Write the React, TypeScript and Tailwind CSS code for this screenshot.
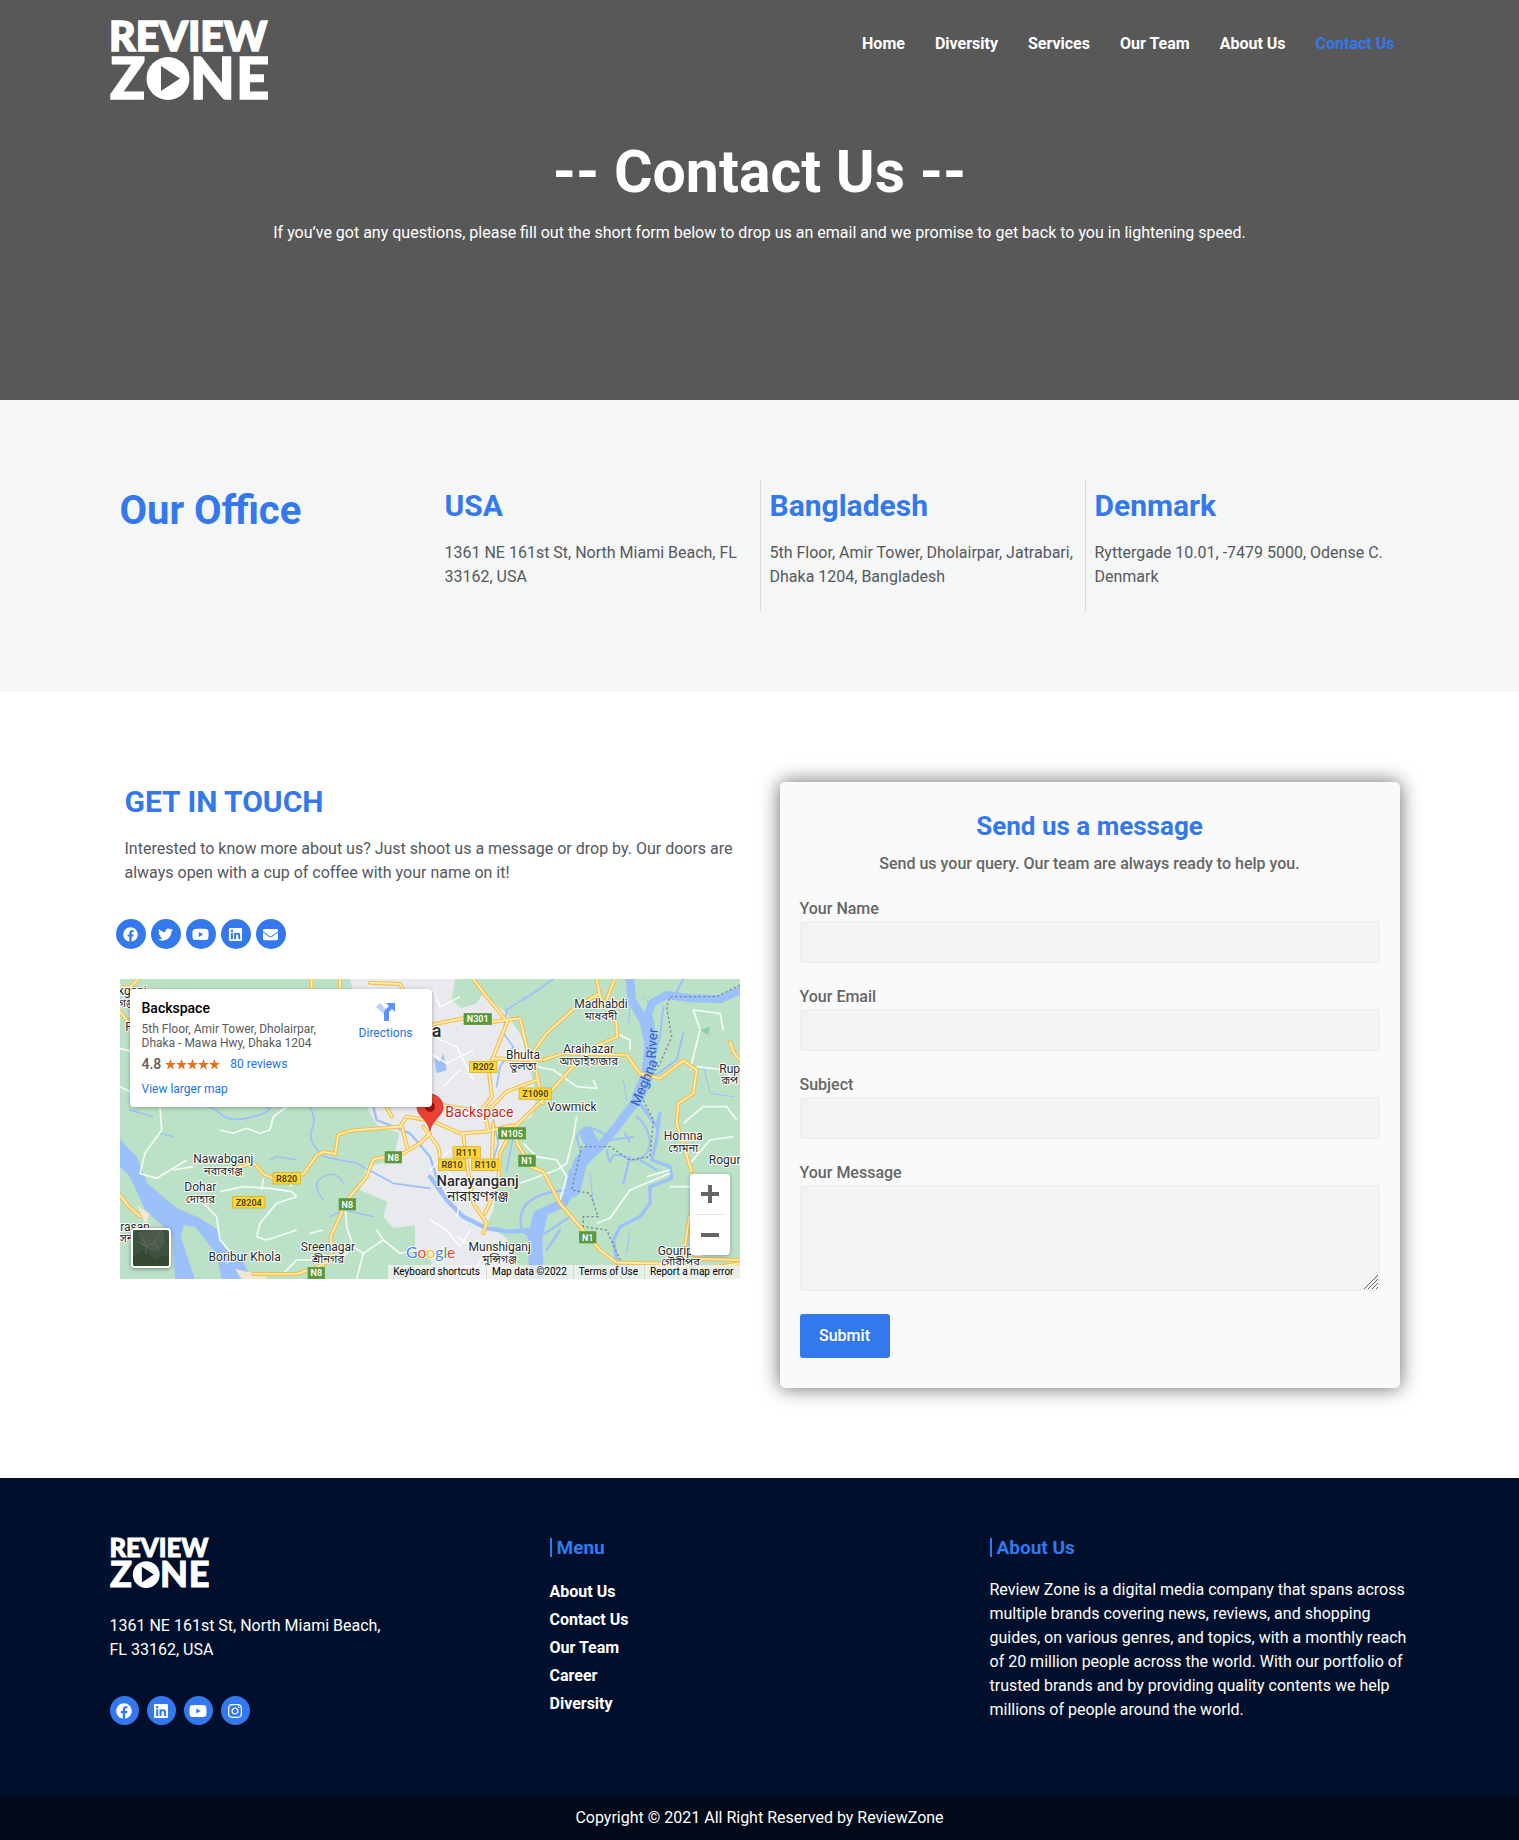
import React from "react";
import {
  FaEnvelope,
  FaFacebook,
  FaInstagram,
  FaLinkedin,
  FaTwitter,
  FaYoutube,
} from "react-icons/fa";

const NAV = ["Home", "Diversity", "Services", "Our Team", "About Us", "Contact Us"];

const OFFICES = [
  { name: "USA", address: "1361 NE 161st St, North Miami Beach, FL 33162, USA" },
  { name: "Bangladesh", address: "5th Floor, Amir Tower, Dholairpar, Jatrabari, Dhaka 1204, Bangladesh" },
  { name: "Denmark", address: "Ryttergade 10.01, -7479 5000, Odense C. Denmark" },
];

const SOCIAL = [
  { label: "Facebook", Icon: FaFacebook },
  { label: "Twitter", Icon: FaTwitter },
  { label: "YouTube", Icon: FaYoutube },
  { label: "LinkedIn", Icon: FaLinkedin },
  { label: "Email", Icon: FaEnvelope },
];

const FOOTER_SOCIAL = [
  { label: "Facebook", Icon: FaFacebook },
  { label: "LinkedIn", Icon: FaLinkedin },
  { label: "YouTube", Icon: FaYoutube },
  { label: "Instagram", Icon: FaInstagram },
];

const FIELDS = [
  { id: "name", label: "Your Name", type: "text" },
  { id: "email", label: "Your Email", type: "email" },
  { id: "subject", label: "Subject", type: "text" },
];

const FOOTER_MENU = ["About Us", "Contact Us", "Our Team", "Career", "Diversity"];

function Logo({ className }: { className: string }) {
  return (
    <svg viewBox="0 0 160 80" className={className} role="img" aria-label="Review Zone">
      <g fill="#fff" stroke="#fff" strokeWidth="1.500" fontFamily="Lato, sans-serif" fontWeight="900">
        <text x="-1" y="31" fontSize="41">REVIEW</text>
        <text x="0" y="79" fontSize="58">Z</text>
        <text x="80" y="79" fontSize="58">N</text>
        <text x="126" y="79" fontSize="58">E</text>
      </g>
      <circle cx="58" cy="58.500" r="21.500" fill="#fff" />
      <path d="M51 46v25l19-12.500z" className="fill-[#585858]" />
    </svg>
  );
}

const WHITE_ROADS = [
  "M30 235L85 250L160 230M30 350L60 365M150 411L155 480L105 550L90 610L140 625L230 570",
  "M330 480L370 490L410 475L450 490L480 480L490 440L530 411",
  "M250 590L190 600M330 665L400 650L480 655L545 665L560 680L500 700L450 760L440 800",
  "M270 690L320 740L330 810L370 855L350 880M460 625L455 660",
  "M705 700L710 770L730 830L760 850L820 810L870 850L920 840M730 830L690 870L560 870L520 910",
  "M760 850L740 927M820 810L800 780M600 790L640 780",
  "M440 800L470 810L560 780M545 650L530 620",
  "M1230 280L1330 300L1400 350L1460 355L1450 330M1400 440L1390 500L1370 580L1340 600L1230 640",
  "M1240 520L1280 560L1340 570L1370 620L1350 690",
  "M1520 190L1560 210L1560 240M1740 300L1770 180L1750 120L1830 130L1840 180M1760 290L1850 300L1870 340",
  "M1460 760L1500 745L1560 660L1680 610M1720 460L1780 410L1850 410L1880 450M1740 580L1800 510L1870 500",
  "M1680 650L1740 650M1680 600L1610 620",
  "M970 60L990 110L1050 80M960 250L1010 280L1090 240M1020 540L960 600M1010 600L1060 660L1040 740",
  "M960 750L1010 780L1050 830L1080 780M1040 800L1120 850L1100 900M1000 830L980 880",
  "M950 100L970 200L1040 230L1090 330M1000 350L1050 300M1090 400L1120 440",
];

const ROADS = [
  "M30 50L60 52L85 27M30 125L55 155M30 675L55 708L90 740",
  "M605 27V60M690 27V60M780 38L870 42L880 60M830 411L845 440",
  "M370 595L432 580L460 612L500 630L580 612L620 556L640 545L676 552L684 495L720 482L870 470L890 440L960 452",
  "M960 490L930 520L880 550L790 568L770 620L712 690L662 800L665 870L620 892L560 912L430 912",
  "M876 470L892 535M940 470L985 530L990 560",
  "M1090 27L1130 80L1192 155L1150 260L1136 300L1146 380L1110 425L970 400",
  "M960 165L1060 145L1150 155L1230 145L1250 230L1280 310L1298 400",
  "M1460 27L1470 80L1518 150L1522 200L1460 228L1400 278L1298 390L1210 475L1222 520L1262 590L1300 605L1350 700L1410 770L1470 840L1520 878L1640 880L1790 895L1890 880",
  "M1514 27L1490 90M1258 260L1310 190L1396 112L1470 70",
  "M1150 265L1250 270L1300 270L1360 250L1550 255L1590 310L1650 325L1720 272L1760 300L1750 370L1705 400L1700 460L1745 605",
  "M1738 740L1725 830M1720 865L1890 870",
  "M960 450L1050 490L1130 485L1210 465M1060 490L1066 550L1090 700L1130 760L1120 790",
  "M1150 460L1145 600M1200 490L1170 550L1165 640L1125 730",
  "M1280 330L1190 365L1125 430L1135 480M1860 215L1870 245L1890 270",
];

const SHIELDS: [string, number, number, boolean][] = [
  ["R820", 530, 625, false],
  ["Z8204", 416, 697, false],
  ["R202", 1120, 291, false],
  ["Z1090", 1276, 371, false],
  ["R111", 1070, 547, false],
  ["R810", 1026, 584, false],
  ["R110", 1126, 584, false],
  ["N8", 850, 562, true],
  ["N8", 712, 703, true],
  ["N8", 619, 909, true],
  ["N301", 1103, 147, true],
  ["N105", 1206, 490, true],
  ["N1", 1251, 572, true],
  ["N1", 1433, 802, true],
];

const PLACES: [string, string, number, number][] = [
  ["Nawabganj", "নবাবগঞ্জ", 340, 580],
  ["Dohar", "দোহার", 271, 664],
  ["Sreenagar", "শ্রীনগর", 654, 844],
  ["Boribur Khola", "", 404, 873],
  ["Madhabdi", "মাধবদী", 1473, 114],
  ["Bhulta", "ভুলতা", 1239, 266],
  ["Araihazar", "আড়াইহাজার", 1436, 249],
  ["Vowmick", "", 1386, 423],
  ["Homna", "হোমনা", 1720, 510],
  ["Munshiganj", "মুন্সিগঞ্জ", 1169, 844],
  ["Gouripur", "গৌরীপুর", 1712, 854],
  ["Rup", "রূপ", 1859, 308],
  ["Rogur", "", 1844, 582],
];

function MapDrawing() {
  return (
    <svg
      viewBox="30 27 1860 900"
      preserveAspectRatio="xMidYMid slice"
      className="block h-full w-full"
      role="img"
      aria-label="Map of the area around Narayanganj"
      fontFamily="Roboto, 'Noto Sans Bengali', 'Noto Sans', sans-serif"
    >
      <rect x="30" y="27" width="1860" height="900" fill="#bbe2c6" />
      <path
        d="M720 27H1035L1025 90L1055 115L1100 100L1120 70L1190 130L1235 200L1260 300L1280 380L1265 440L1210 470L1180 520L1170 620L1150 720L1130 765L1190 805L1205 927H970L960 840L915 850L915 765L850 775L820 740L832 695L750 660L770 590L850 570L868 490L800 465L770 411L760 200Z"
        fill="#e8eaed"
      />
      <g fill="none" stroke="#9cc0f9" strokeLinecap="round" strokeLinejoin="round">
        <path d="M250 411Q300 400 330 430T430 440T470 411M600 411Q620 450 605 480T640 560L740 580L850 640L960 655" strokeWidth="5" />
        <path d="M790 411L800 450L900 490L960 560L985 640L1010 690" strokeWidth="7" />
        <path d="M640 690Q600 640 640 620T700 640M660 740L700 720L790 740M480 570L500 560L560 570M60 420L130 440M150 490L190 500" strokeWidth="4" />
        <path d="M1250 80L1190 120L1180 190L1210 230L1170 290L1160 350M1330 27L1240 90M1150 450L1165 520L1150 570M1210 500L1190 600" strokeWidth="5" />
        <path d="M960 620L1010 690L1060 740L1130 775L1200 785L1270 780" strokeWidth="13" />
        <path d="M1560 27L1565 90L1600 150L1620 230L1610 320L1580 390L1520 470L1470 530L1410 580L1390 650L1360 700L1290 730L1270 790L1275 927" strokeWidth="26" />
        <path d="M1612 150L1622 230L1614 310L1585 380" strokeWidth="38" />
        <path d="M1290 740L1275 800L1280 927" strokeWidth="44" />
        <path d="M1430 490L1450 530L1410 580L1390 660" strokeWidth="42" />
        <path d="M1890 60L1830 88L1740 85L1670 75L1625 100L1610 150" strokeWidth="24" />
        <path d="M1720 27L1700 65M1660 110L1650 200L1610 330M1720 190L1700 270L1630 320" strokeWidth="6" />
        <path d="M1590 400L1640 470L1650 430M1648 440L1640 510L1625 570L1680 590L1685 625L1620 650L1620 700L1590 740L1530 770L1510 810L1520 870" strokeWidth="10" />
        <path d="M1415 560L1400 500Q1420 460 1460 480T1500 510M1490 540Q1500 600 1505 560Q1520 545 1560 570Q1620 570 1620 510Q1610 460 1580 440M1500 510L1570 500M1545 490L1560 515" strokeWidth="6" />
        <path d="M1270 800Q1220 790 1235 730T1370 660L1380 600M1290 800L1380 740M1310 840L1350 780M1560 560L1540 640M1640 600L1590 570" strokeWidth="7" />
        <path d="M1560 110L1555 160M1540 330L1550 390M1630 110L1600 80M1780 290L1800 370L1870 380M1440 610L1450 700M1560 780L1550 850" strokeWidth="3" />
      </g>
      <path
        d="M30 508L80 560L112 640L200 715L265 742L318 775L345 835L400 875L425 927H335L318 850L255 770L222 765L212 800L255 927H195L188 800L150 760L105 720L60 620L30 590Z"
        fill="#9cc0f9"
      />
      <path d="M972 265L990 275L1000 250L1010 300L980 310Z" fill="#9cc0f9" />
      <path d="M375 897L410 905L465 912L470 927H395Z" fill="#f3e6cf" />
      <path d="M80 705L118 730L108 765Z" fill="#f3e6cf" />
      <path d="M1770 180L1800 170L1795 195Z" fill="#8fd0a0" />

      <g fill="none" stroke="#fff" strokeWidth="5" strokeOpacity="0.850" strokeLinejoin="round">
        {WHITE_ROADS.map((d) => (
          <path key={d} d={d} />
        ))}
      </g>
      <path
        d="M1890 45L1820 80L1680 80L1670 110L1685 200L1650 280L1590 370L1630 450L1620 560L1560 570L1500 530L1415 530L1385 660L1440 670L1465 740L1420 740L1420 770L1490 780L1535 880V927"
        fill="none"
        stroke="#7a8896"
        strokeWidth="4"
        strokeDasharray="7 7"
      />
      <g fill="none" strokeLinejoin="round" strokeLinecap="round">
        {ROADS.map((d) => (
          <path key={d} d={d} stroke="#f5bf50" strokeWidth="12" />
        ))}
        {ROADS.map((d) => (
          <path key={d} d={d} stroke="#feefb4" strokeWidth="5" />
        ))}
      </g>

      {SHIELDS.map(([name, x, y, green]) => {
        const width = 18 + name.length * 16;
        return (
          <g key={`${name}-${x}`}>
            <rect
              x={x - width / 2}
              y={y - 17}
              width={width}
              height="34"
              fill={green ? "#5b9a3c" : "#fdd835"}
              stroke={green ? "#5b9a3c" : "#d9a520"}
              strokeWidth="2"
            />
            <text x={x} y={y + 10} textAnchor="middle" fontSize="27" fontWeight="600" fill={green ? "#fff" : "#4d4220"}>
              {name}
            </text>
          </g>
        );
      })}

      <g textAnchor="middle" fill="#28292c" stroke="#fff" strokeWidth="6" strokeLinejoin="round" paintOrder="stroke" fontSize="36">
        {PLACES.map(([name, local, x, y]) => (
          <g key={name}>
            <text x={x} y={y}>{name}</text>
            {local && <text x={x} y={y + 35} fontSize="34">{local}</text>}
          </g>
        ))}
        <text x="67" y="76">kganj</text>
        <text x="50" y="110" fontSize="34">গঞ্জ</text>
        <text x="56" y="184">F</text>
        <text x="75" y="784">rasan</text>
        <text x="50" y="815" fontSize="34">সন</text>
        <text x="1103" y="647" fontSize="44" fontWeight="500">Narayanganj</text>
        <text x="1103" y="692" fontSize="42">নারায়ণগঞ্জ</text>
        <text x="994" y="202" fontSize="54" fontWeight="500" textAnchor="end">a</text>
      </g>
      <g fill="#2d62c4" fontSize="41">
        <text transform="translate(1586 411) rotate(-67)">Meghna</text>
        <text transform="translate(1637 266) rotate(-86)">River</text>
      </g>

      <path d="M960 483C952 445 921 440 921 411A39 39 0 0 1 999 411C999 440 968 445 960 483Z" fill="#ea4335" stroke="#c5221f" strokeWidth="2" />
      <circle cx="960" cy="411" r="15" fill="#a50e0e" />
      <text x="1006" y="441" fontSize="42" fill="#c5221f" stroke="#fff" strokeWidth="6" paintOrder="stroke">
        Backspace
      </text>

      <g fontFamily="Lato, sans-serif" fontSize="47" stroke="#fff" strokeWidth="5" paintOrder="stroke">
        <text x="888" y="865">
          <tspan fill="#4285f4">G</tspan>
          <tspan fill="#ea4335">o</tspan>
          <tspan fill="#fbbc05">o</tspan>
          <tspan fill="#4285f4">g</tspan>
          <tspan fill="#34a853">l</tspan>
          <tspan fill="#ea4335">e</tspan>
        </text>
      </g>
    </svg>
  );
}

function Stars() {
  return (
    <svg viewBox="0 0 55 11" className="h-[11px] w-[55px]" role="img" aria-label="4.8 out of 5 stars">
      {[0, 11, 22, 33, 44].map((x) => (
        <path
          key={x}
          d="M5.500 0L6.900 3.900L11 4L7.700 6.500L8.900 10.500L5.500 8.100L2.100 10.500L3.300 6.500L0 4L4.100 3.900Z"
          transform={`translate(${x} 0)`}
          fill="#e7711b"
        />
      ))}
    </svg>
  );
}

function LocationMap() {
  return (
    <div className="relative mt-[30px] h-[300px] overflow-hidden">
      <MapDrawing />
      <div className="absolute left-[10px] top-[10px] flex h-[118px] w-[302px] justify-between rounded-sm bg-white py-[10px] pl-3 pr-[19px] text-xs shadow-[0_1px_4px_rgba(0,0,0,0.3)]">
        <div className="text-[#5b5b5b]">
          <h3 className="text-sm leading-[18px] font-medium text-black">Backspace</h3>
          <p className="mt-[5px] w-[190px] leading-[14px]">5th Floor, Amir Tower, Dholairpar, Dhaka - Mawa Hwy, Dhaka 1204</p>
          <div className="mt-[6px] flex items-center leading-4">
            <span className="mr-1 text-sm leading-4 font-medium">4.8</span>
            <Stars />
            <a href="#reviews" className="ml-[10px] text-[#1a73e8]">80 reviews</a>
          </div>
          <a href="#map" className="mt-[9px] block leading-4 text-[#1a73e8]">View larger map</a>
        </div>
        <a href="#directions" className="flex flex-col items-center text-[#1a73e8]">
          <svg viewBox="0 0 20 20" className="mt-[3px] h-5 w-5" aria-hidden="true">
            <path d="M0 5L4 1L11 8L8 12Z" fill="#bdd1fb" />
            <path d="M8 19V11Q8 9 9.500 7.500L13 4L10 1H19V10L16 7L13 10V19Z" fill="#5c92f8" />
          </svg>
          <span className="mt-[2px] leading-[18px]">Directions</span>
        </a>
      </div>
      <button
        type="button"
        aria-label="Show satellite imagery"
        className="absolute bottom-[11px] left-[11px] h-[40px] w-[40px] overflow-hidden rounded-sm border-2 border-white shadow-[0_1px_4px_rgba(0,0,0,0.4)]"
      >
        <svg viewBox="0 0 36 36" className="block h-full w-full">
          <rect width="36" height="36" fill="#3c5240" />
          <path d="M4 2L30 0L32 14L22 22L10 16Z" fill="#4b5a4b" />
          <path d="M0 26L12 20L22 30L36 24V36H0Z" fill="#34492f" />
          <path d="M8 6L14 16L12 24M14 16L22 12L26 4M22 12L26 22M4 12L14 16" stroke="#6b7468" strokeOpacity="0.600" fill="none" />
        </svg>
      </button>
      <div className="absolute bottom-[24px] right-[10px] flex w-[40px] flex-col rounded-sm bg-white shadow-[0_1px_4px_rgba(0,0,0,0.3)]">
        <button type="button" aria-label="Zoom in" className="flex h-[40px] items-center justify-center">
          <svg viewBox="0 0 18 18" className="h-[18px] w-[18px]">
            <path d="M7 0h4v7h7v4h-7v7H7v-7H0V7h7z" fill="#666" />
          </svg>
        </button>
        <span className="mx-[5px] h-px bg-[#e6e6e6]" />
        <button type="button" aria-label="Zoom out" className="flex h-[40px] items-center justify-center">
          <svg viewBox="0 0 18 18" className="h-[18px] w-[18px]">
            <path d="M0 7h18v4H0z" fill="#666" />
          </svg>
        </button>
      </div>
      <div className="absolute bottom-0 right-0 flex h-[14px] items-center divide-x divide-[#c9dccd] bg-[#f5f5f5]/75 text-[10px] leading-[14px] text-black">
        <button type="button" className="pr-[6px] pl-[5px]">Keyboard shortcuts</button>
        <span className="pr-[6px] pl-[5px]">Map data ©2022</span>
        <a href="#terms" className="pr-[6px] pl-[5px]">Terms of Use</a>
        <a href="#report" className="pr-[6px] pl-[5px]">Report a map error</a>
      </div>
    </div>
  );
}

export default function App() {
  return (
    <div className="bg-white font-[Roboto,sans-serif] text-base leading-6 text-[#54595f]">
      <div className="min-h-[400px] bg-[#585858] text-white">
        <header className="mx-auto flex max-w-[1300px] items-start justify-between pt-5">
          <a href="#home">
            <Logo className="block h-[80px] w-[160px] overflow-visible" />
          </a>
          <nav className="flex pt-[12px] font-bold">
            {NAV.map((item) => (
              <a key={item} href="#page" className={item === "Contact Us" ? "px-[15px] text-[#3478ed]" : "px-[15px]"}>
                {item}
              </a>
            ))}
          </nav>
        </header>
        <div className="px-5 pt-[42px] text-center">
          <h1 className="text-[59px] leading-[60px] font-bold">-- Contact Us --</h1>
          <p className="mt-[19px]">
            If you’ve got any questions, please fill out the short form below to drop us an email and we promise to get back to you in lightening speed.
          </p>
        </div>
      </div>

      <section className="bg-[#f5f7f6] py-20">
        <div className="mx-auto grid max-w-[1300px] grid-cols-4">
          <h2 className="px-[10px] pt-[11px] text-[40px] leading-[40px] font-bold text-[#3478ed]">Our Office</h2>
          {OFFICES.map((office, index) => (
            <div
              key={office.name}
              className={index > 0 ? "border-l border-[#d9dcdb] px-[9px] pt-[11px] pb-[23px]" : "px-[10px] pt-[11px] pb-[23px]"}
            >
              <h3 className="text-[30px] leading-[30px] font-bold text-[#3478ed]">{office.name}</h3>
              <p className="mt-5">{office.address}</p>
            </div>
          ))}
        </div>
      </section>

      <section className="mx-auto grid max-w-[1300px] grid-cols-2 gap-10 px-[10px] py-[90px]">
        <div className="pt-[5px]">
          <div className="px-[5px]">
            <h2 className="text-[30px] leading-[30px] font-bold text-[#3478ed]">GET IN TOUCH</h2>
            <p className="mt-5">
              Interested to know more about us? Just shoot us a message or drop by. Our doors are always open with a cup of coffee with your name on it!
            </p>
          </div>
          <div className="mt-[34px] -ml-1 flex gap-[5px]">
            {SOCIAL.map(({ label, Icon }) => (
              <a
                key={label}
                href="#social"
                aria-label={label}
                className="flex h-[30px] w-[30px] items-center justify-center rounded-full bg-[#3478ed] text-white"
              >
                <Icon className={label === "YouTube" ? "h-[17px] w-[17px]" : "h-[15px] w-[15px]"} />
              </a>
            ))}
          </div>
          <LocationMap />
        </div>

        <form className="rounded-[5px] bg-[#fafafa] px-5 pt-[31px] pb-[30px] font-medium text-[#666] shadow-[0_0_20px_rgba(0,0,0,0.6)]">
          <h2 className="text-center text-[26px] leading-[26px] font-bold text-[#3478ed]">Send us a message</h2>
          <p className="mt-[13px] mb-[21px] text-center">Send us your query. Our team are always ready to help you.</p>
          {FIELDS.map((field) => (
            <div key={field.id} className="mb-[22px]">
              <label htmlFor={field.id} className="block">{field.label}</label>
              <input
                id={field.id}
                type={field.type}
                className="block h-[42px] w-full rounded-[3px] border border-[#ededed] bg-[#f3f3f3] px-3"
              />
            </div>
          ))}
          <label htmlFor="message" className="block">Your Message</label>
          <div className="relative">
            <textarea
              id="message"
              className="block h-[106px] w-full resize-none rounded-[3px] border border-[#ededed] bg-[#f3f3f3] px-3 py-2"
            />
            <svg
              viewBox="0 0 14 14"
              className="pointer-events-none absolute right-[2px] bottom-[2px] h-[14px] w-[14px]"
              stroke="#666"
              fill="none"
              aria-hidden="true"
            >
              <path d="M0 14L14 0M4 14L14 4M8 14L14 8M12 14L14 12" />
            </svg>
          </div>
          <button type="submit" className="mt-[23px] block h-[44px] w-[90px] rounded-[3px] bg-[#3478ed] text-white">
            Submit
          </button>
        </form>
      </section>

      <footer className="bg-[#00102c] text-white">
        <div className="mx-auto grid max-w-[1300px] grid-cols-3 gap-5 pt-[60px] pb-[71px]">
          <div>
            <Logo className="block h-[50px] w-[100px] overflow-visible [&>path]:fill-[#00102c]" />
            <p className="mt-[26px] max-w-[290px]">1361 NE 161st St, North Miami Beach, FL 33162, USA</p>
            <div className="mt-[34px] flex gap-2">
              {FOOTER_SOCIAL.map(({ label, Icon }) => (
                <a
                  key={label}
                  href="#social"
                  aria-label={label}
                  className="flex h-[29px] w-[29px] items-center justify-center rounded-full bg-[#3478ed]"
                >
                  <Icon className={label === "YouTube" ? "h-[18px] w-[18px]" : "h-4 w-4"} />
                </a>
              ))}
            </div>
          </div>
          <div>
            <h2 className="border-l-2 border-[#3478ed] pl-[5px] text-[19px] leading-[19px] font-bold text-[#3478ed]">Menu</h2>
            <ul className="mt-[21px] leading-7 font-bold">
              {FOOTER_MENU.map((item) => (
                <li key={item}>
                  <a href="#page">{item}</a>
                </li>
              ))}
            </ul>
          </div>
          <div>
            <h2 className="border-l-2 border-[#3478ed] pl-[5px] text-[19px] leading-[19px] font-bold text-[#3478ed]">About Us</h2>
            <p className="mt-[21px]">
              Review Zone is a digital media company that spans across multiple brands covering news, reviews, and shopping guides, on various genres, and topics, with a monthly reach of 20 million people across the world. With our portfolio of trusted brands and by providing quality contents we help millions of people around the world.
            </p>
          </div>
        </div>
        <div className="bg-[#020a19] py-[10px] text-center">Copyright © 2021 All Right Reserved by ReviewZone</div>
      </footer>
    </div>
  );
}
